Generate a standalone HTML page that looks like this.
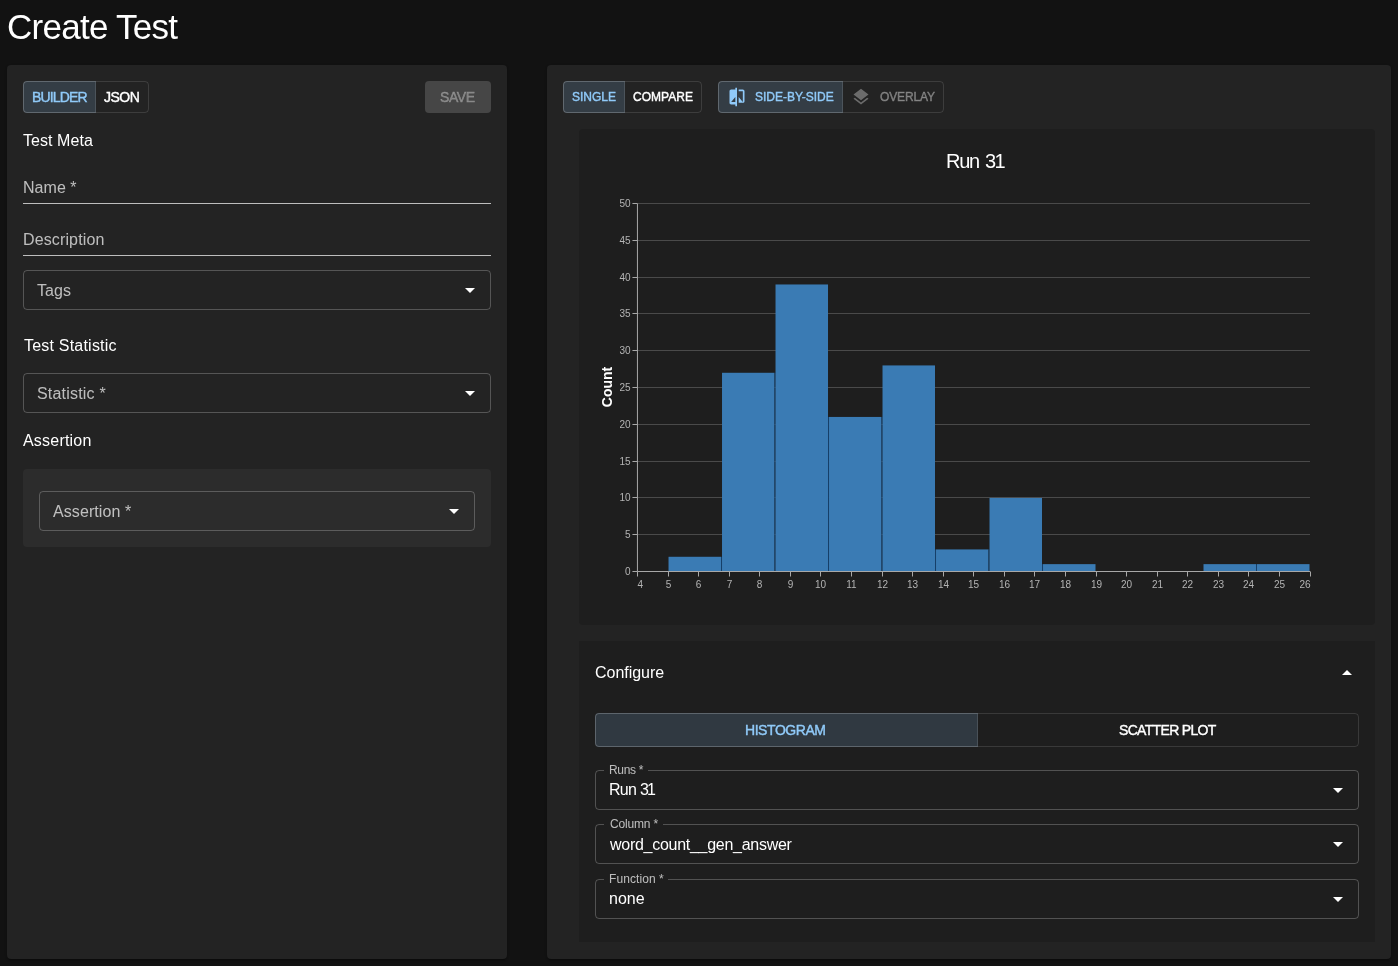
<!DOCTYPE html>
<html><head><meta charset="utf-8"><title>Create Test</title>
<style>
html,body{margin:0;padding:0;}
body{width:1398px;height:966px;background:#121212;position:relative;overflow:hidden;font-family:"Liberation Sans",sans-serif;}
.t{position:absolute;line-height:1;white-space:nowrap;will-change:transform;}
.b{position:absolute;}
</style></head><body>
<div class="t" style="left:6.64px;top:9px;font-size:35px;color:#ffffff;letter-spacing:-0.740px;font-weight:normal;">Create Test</div>
<div class="b" style="left:7px;top:65px;width:500px;height:894px;background:#232323;border-radius:4px;box-shadow:0 2px 1px -1px rgba(0,0,0,.2),0 1px 1px 0 rgba(0,0,0,.14),0 1px 3px 0 rgba(0,0,0,.12);"></div>
<div class="b" style="left:23px;top:81px;width:126px;height:32px;border:1px solid rgba(255,255,255,0.12);border-radius:4px;box-sizing:border-box;"></div>
<div class="b" style="left:23px;top:81px;width:73px;height:32px;background:rgba(144,202,249,0.16);border:1px solid rgba(255,255,255,0.12);border-radius:4px 0 0 4px;box-sizing:border-box;"></div>
<div class="t" style="left:31.50px;top:90px;font-size:14px;color:#90caf9;letter-spacing:-0.827px;font-weight:normal;-webkit-text-stroke:0.4px #90caf9;">BUILDER</div>
<div class="t" style="left:104.40px;top:90px;font-size:14px;color:#ffffff;letter-spacing:-0.533px;font-weight:normal;-webkit-text-stroke:0.4px #ffffff;">JSON</div>
<div class="b" style="left:425px;top:81px;width:66px;height:32px;background:#464646;border-radius:4px;"></div>
<div class="t" style="left:440.48px;top:90px;font-size:14px;color:rgba(255,255,255,0.3);letter-spacing:-0.420px;font-weight:normal;-webkit-text-stroke:0.4px rgba(255,255,255,0.3);">SAVE</div>
<div class="t" style="left:23.26px;top:133px;font-size:16px;color:#ffffff;letter-spacing:0.058px;font-weight:normal;">Test Meta</div>
<div class="t" style="left:22.50px;top:180px;font-size:16px;color:rgba(255,255,255,0.7);letter-spacing:0.048px;font-weight:normal;">Name *</div>
<div class="b" style="left:23px;top:203px;width:468px;height:1px;background:rgba(255,255,255,0.7);"></div>
<div class="t" style="left:22.52px;top:232px;font-size:16px;color:rgba(255,255,255,0.7);letter-spacing:0.128px;font-weight:normal;">Description</div>
<div class="b" style="left:23px;top:255px;width:468px;height:1px;background:rgba(255,255,255,0.7);"></div>
<div class="b" style="left:23px;top:270px;width:468px;height:40px;border:1px solid rgba(255,255,255,0.23);border-radius:4px;box-sizing:border-box;"></div>
<div class="t" style="left:37.36px;top:283px;font-size:16px;color:rgba(255,255,255,0.7);letter-spacing:0.033px;font-weight:normal;">Tags</div>
<svg class="b" style="left:465px;top:287.5px" width="10" height="5" viewBox="0 0 10 5"><path d="M0 0L5 5L10 0z" fill="#fff"/></svg>
<div class="t" style="left:23.98px;top:338px;font-size:16px;color:#ffffff;letter-spacing:0.208px;font-weight:normal;">Test Statistic</div>
<div class="b" style="left:23px;top:373px;width:468px;height:40px;border:1px solid rgba(255,255,255,0.23);border-radius:4px;box-sizing:border-box;"></div>
<div class="t" style="left:36.74px;top:386px;font-size:16px;color:rgba(255,255,255,0.7);letter-spacing:0.196px;font-weight:normal;">Statistic *</div>
<svg class="b" style="left:465px;top:390.5px" width="10" height="5" viewBox="0 0 10 5"><path d="M0 0L5 5L10 0z" fill="#fff"/></svg>
<div class="t" style="left:23.36px;top:433px;font-size:16px;color:#ffffff;letter-spacing:0.203px;font-weight:normal;">Assertion</div>
<div class="b" style="left:23px;top:469px;width:468px;height:78px;background:#2c2c2c;border-radius:4px;"></div>
<div class="b" style="left:39px;top:491px;width:436px;height:40px;border:1px solid rgba(255,255,255,0.23);border-radius:4px;box-sizing:border-box;"></div>
<div class="t" style="left:53.36px;top:504px;font-size:16px;color:rgba(255,255,255,0.7);letter-spacing:0.088px;font-weight:normal;">Assertion *</div>
<svg class="b" style="left:449px;top:508.5px" width="10" height="5" viewBox="0 0 10 5"><path d="M0 0L5 5L10 0z" fill="#fff"/></svg>
<div class="b" style="left:547px;top:65px;width:844px;height:894px;background:#232323;border-radius:4px;box-shadow:0 2px 1px -1px rgba(0,0,0,.2),0 1px 1px 0 rgba(0,0,0,.14),0 1px 3px 0 rgba(0,0,0,.12);"></div>
<div class="b" style="left:563px;top:81px;width:139px;height:32px;border:1px solid rgba(255,255,255,0.12);border-radius:4px;box-sizing:border-box;"></div>
<div class="b" style="left:563px;top:81px;width:62px;height:32px;background:rgba(144,202,249,0.16);border:1px solid rgba(255,255,255,0.12);border-radius:4px 0 0 4px;box-sizing:border-box;"></div>
<div class="t" style="left:572.38px;top:91px;font-size:12px;color:#90caf9;letter-spacing:-0.008px;font-weight:normal;-webkit-text-stroke:0.4px #90caf9;">SINGLE</div>
<div class="t" style="left:633.15px;top:91px;font-size:12px;color:#ffffff;letter-spacing:0.032px;font-weight:normal;-webkit-text-stroke:0.4px #ffffff;">COMPARE</div>
<div class="b" style="left:718px;top:81px;width:226px;height:32px;border:1px solid rgba(255,255,255,0.12);border-radius:4px;box-sizing:border-box;"></div>
<div class="b" style="left:718px;top:81px;width:125px;height:32px;background:rgba(144,202,249,0.16);border:1px solid rgba(255,255,255,0.12);border-radius:4px 0 0 4px;box-sizing:border-box;"></div>
<svg class="b" style="left:726.7px;top:86.6px" width="20" height="20" viewBox="0 0 24 24"><path d="M10 3H5c-1.11 0-2 .9-2 2v14c0 1.1.89 2 2 2h5v2h2V1h-2v2zm0 15H5l5-6v6zm9-15h-5v2h5v13l-5-6v7h5c1.1 0 2-.9 2-2V5c0-1.1-.9-2-2-2z" fill="#90caf9"/></svg>
<div class="t" style="left:755.19px;top:91px;font-size:12px;color:#90caf9;letter-spacing:-0.017px;font-weight:normal;-webkit-text-stroke:0.4px #90caf9;">SIDE-BY-SIDE</div>
<svg class="b" style="left:851.1px;top:87.2px" width="20" height="20" viewBox="0 0 24 24"><path d="M11.99 18.54l-7.37-5.73L3 14.07l9 7 9-7-1.63-1.27-7.38 5.74zM12 16l7.36-5.73L21 9l-9-7-9 7 1.63 1.27L12 16z" fill="rgba(255,255,255,0.33)"/></svg>
<div class="t" style="left:879.66px;top:91px;font-size:12px;color:rgba(255,255,255,0.33);letter-spacing:-0.135px;font-weight:normal;-webkit-text-stroke:0.4px rgba(255,255,255,0.33);">OVERLAY</div>
<div class="b" style="left:579px;top:129px;width:796px;height:496px;background:#1e1e1e;border-radius:4px;"></div>
<div class="t" style="left:946.24px;top:151px;font-size:20px;color:#ffffff;letter-spacing:-1.250px;font-weight:normal;">Run</div>
<div class="t" style="left:985.00px;top:151px;font-size:20px;color:#ffffff;letter-spacing:-1.740px;font-weight:normal;">31</div>
<svg class="b" style="left:0;top:0" width="1398" height="966" viewBox="0 0 1398 966"><line x1="637.45" x2="1310.0" y1="534.5" y2="534.5" stroke="#4a4a4a" stroke-width="1"/><line x1="637.45" x2="1310.0" y1="497.5" y2="497.5" stroke="#4a4a4a" stroke-width="1"/><line x1="637.45" x2="1310.0" y1="461.5" y2="461.5" stroke="#4a4a4a" stroke-width="1"/><line x1="637.45" x2="1310.0" y1="424.5" y2="424.5" stroke="#4a4a4a" stroke-width="1"/><line x1="637.45" x2="1310.0" y1="387.5" y2="387.5" stroke="#4a4a4a" stroke-width="1"/><line x1="637.45" x2="1310.0" y1="350.5" y2="350.5" stroke="#4a4a4a" stroke-width="1"/><line x1="637.45" x2="1310.0" y1="313.5" y2="313.5" stroke="#4a4a4a" stroke-width="1"/><line x1="637.45" x2="1310.0" y1="277.5" y2="277.5" stroke="#4a4a4a" stroke-width="1"/><line x1="637.45" x2="1310.0" y1="240.5" y2="240.5" stroke="#4a4a4a" stroke-width="1"/><line x1="637.45" x2="1310.0" y1="203.5" y2="203.5" stroke="#4a4a4a" stroke-width="1"/><rect x="668.52" y="556.78" width="52.50" height="14.72" fill="#3a7bb4"/><rect x="721.02" y="556.78" width="1" height="14.72" fill="#17406a"/><rect x="722.02" y="372.78" width="52.50" height="198.72" fill="#3a7bb4"/><rect x="774.52" y="372.78" width="1" height="198.72" fill="#17406a"/><rect x="775.52" y="284.46" width="52.50" height="287.04" fill="#3a7bb4"/><rect x="828.02" y="416.94" width="1" height="154.56" fill="#17406a"/><rect x="829.02" y="416.94" width="52.50" height="154.56" fill="#3a7bb4"/><rect x="881.51" y="416.94" width="1" height="154.56" fill="#17406a"/><rect x="882.51" y="365.42" width="52.50" height="206.08" fill="#3a7bb4"/><rect x="935.01" y="549.42" width="1" height="22.08" fill="#17406a"/><rect x="936.01" y="549.42" width="52.50" height="22.08" fill="#3a7bb4"/><rect x="988.51" y="549.42" width="1" height="22.08" fill="#17406a"/><rect x="989.51" y="497.90" width="52.50" height="73.60" fill="#3a7bb4"/><rect x="1042.01" y="564.14" width="1" height="7.36" fill="#17406a"/><rect x="1043.01" y="564.14" width="52.50" height="7.36" fill="#3a7bb4"/><rect x="1203.50" y="564.14" width="52.50" height="7.36" fill="#3a7bb4"/><rect x="1256.00" y="564.14" width="1" height="7.36" fill="#17406a"/><rect x="1257.00" y="564.14" width="52.50" height="7.36" fill="#3a7bb4"/><line x1="637.45" x2="637.45" y1="203.5" y2="571.5" stroke="#a8a8a8" stroke-width="1"/><line x1="637.45" x2="1310.0" y1="571.5" y2="571.5" stroke="#a8a8a8" stroke-width="1"/><line x1="632.45" x2="637.45" y1="571.5" y2="571.5" stroke="#a8a8a8" stroke-width="1"/><text x="630.5" y="575.0" text-anchor="end" font-size="10" fill="#b4b4b4" font-family="Liberation Sans">0</text><line x1="632.45" x2="637.45" y1="534.5" y2="534.5" stroke="#a8a8a8" stroke-width="1"/><text x="630.5" y="538.0" text-anchor="end" font-size="10" fill="#b4b4b4" font-family="Liberation Sans">5</text><line x1="632.45" x2="637.45" y1="497.5" y2="497.5" stroke="#a8a8a8" stroke-width="1"/><text x="630.5" y="501.0" text-anchor="end" font-size="10" fill="#b4b4b4" font-family="Liberation Sans">10</text><line x1="632.45" x2="637.45" y1="461.5" y2="461.5" stroke="#a8a8a8" stroke-width="1"/><text x="630.5" y="465.0" text-anchor="end" font-size="10" fill="#b4b4b4" font-family="Liberation Sans">15</text><line x1="632.45" x2="637.45" y1="424.5" y2="424.5" stroke="#a8a8a8" stroke-width="1"/><text x="630.5" y="428.0" text-anchor="end" font-size="10" fill="#b4b4b4" font-family="Liberation Sans">20</text><line x1="632.45" x2="637.45" y1="387.5" y2="387.5" stroke="#a8a8a8" stroke-width="1"/><text x="630.5" y="391.0" text-anchor="end" font-size="10" fill="#b4b4b4" font-family="Liberation Sans">25</text><line x1="632.45" x2="637.45" y1="350.5" y2="350.5" stroke="#a8a8a8" stroke-width="1"/><text x="630.5" y="354.0" text-anchor="end" font-size="10" fill="#b4b4b4" font-family="Liberation Sans">30</text><line x1="632.45" x2="637.45" y1="313.5" y2="313.5" stroke="#a8a8a8" stroke-width="1"/><text x="630.5" y="317.0" text-anchor="end" font-size="10" fill="#b4b4b4" font-family="Liberation Sans">35</text><line x1="632.45" x2="637.45" y1="277.5" y2="277.5" stroke="#a8a8a8" stroke-width="1"/><text x="630.5" y="281.0" text-anchor="end" font-size="10" fill="#b4b4b4" font-family="Liberation Sans">40</text><line x1="632.45" x2="637.45" y1="240.5" y2="240.5" stroke="#a8a8a8" stroke-width="1"/><text x="630.5" y="244.0" text-anchor="end" font-size="10" fill="#b4b4b4" font-family="Liberation Sans">45</text><line x1="632.45" x2="637.45" y1="203.5" y2="203.5" stroke="#a8a8a8" stroke-width="1"/><text x="630.5" y="207.0" text-anchor="end" font-size="10" fill="#b4b4b4" font-family="Liberation Sans">50</text><line x1="637.50" x2="637.50" y1="571.5" y2="576.5" stroke="#a8a8a8" stroke-width="1"/><text x="637.50" y="587.5" text-anchor="start" font-size="10" fill="#b4b4b4" font-family="Liberation Sans">4</text><line x1="668.50" x2="668.50" y1="571.5" y2="576.5" stroke="#a8a8a8" stroke-width="1"/><text x="668.50" y="587.5" text-anchor="middle" font-size="10" fill="#b4b4b4" font-family="Liberation Sans">5</text><line x1="698.50" x2="698.50" y1="571.5" y2="576.5" stroke="#a8a8a8" stroke-width="1"/><text x="698.50" y="587.5" text-anchor="middle" font-size="10" fill="#b4b4b4" font-family="Liberation Sans">6</text><line x1="729.50" x2="729.50" y1="571.5" y2="576.5" stroke="#a8a8a8" stroke-width="1"/><text x="729.50" y="587.5" text-anchor="middle" font-size="10" fill="#b4b4b4" font-family="Liberation Sans">7</text><line x1="759.50" x2="759.50" y1="571.5" y2="576.5" stroke="#a8a8a8" stroke-width="1"/><text x="759.50" y="587.5" text-anchor="middle" font-size="10" fill="#b4b4b4" font-family="Liberation Sans">8</text><line x1="790.50" x2="790.50" y1="571.5" y2="576.5" stroke="#a8a8a8" stroke-width="1"/><text x="790.50" y="587.5" text-anchor="middle" font-size="10" fill="#b4b4b4" font-family="Liberation Sans">9</text><line x1="820.50" x2="820.50" y1="571.5" y2="576.5" stroke="#a8a8a8" stroke-width="1"/><text x="820.50" y="587.5" text-anchor="middle" font-size="10" fill="#b4b4b4" font-family="Liberation Sans">10</text><line x1="851.50" x2="851.50" y1="571.5" y2="576.5" stroke="#a8a8a8" stroke-width="1"/><text x="851.50" y="587.5" text-anchor="middle" font-size="10" fill="#b4b4b4" font-family="Liberation Sans">11</text><line x1="882.50" x2="882.50" y1="571.5" y2="576.5" stroke="#a8a8a8" stroke-width="1"/><text x="882.50" y="587.5" text-anchor="middle" font-size="10" fill="#b4b4b4" font-family="Liberation Sans">12</text><line x1="912.50" x2="912.50" y1="571.5" y2="576.5" stroke="#a8a8a8" stroke-width="1"/><text x="912.50" y="587.5" text-anchor="middle" font-size="10" fill="#b4b4b4" font-family="Liberation Sans">13</text><line x1="943.50" x2="943.50" y1="571.5" y2="576.5" stroke="#a8a8a8" stroke-width="1"/><text x="943.50" y="587.5" text-anchor="middle" font-size="10" fill="#b4b4b4" font-family="Liberation Sans">14</text><line x1="973.50" x2="973.50" y1="571.5" y2="576.5" stroke="#a8a8a8" stroke-width="1"/><text x="973.50" y="587.5" text-anchor="middle" font-size="10" fill="#b4b4b4" font-family="Liberation Sans">15</text><line x1="1004.50" x2="1004.50" y1="571.5" y2="576.5" stroke="#a8a8a8" stroke-width="1"/><text x="1004.50" y="587.5" text-anchor="middle" font-size="10" fill="#b4b4b4" font-family="Liberation Sans">16</text><line x1="1034.50" x2="1034.50" y1="571.5" y2="576.5" stroke="#a8a8a8" stroke-width="1"/><text x="1034.50" y="587.5" text-anchor="middle" font-size="10" fill="#b4b4b4" font-family="Liberation Sans">17</text><line x1="1065.50" x2="1065.50" y1="571.5" y2="576.5" stroke="#a8a8a8" stroke-width="1"/><text x="1065.50" y="587.5" text-anchor="middle" font-size="10" fill="#b4b4b4" font-family="Liberation Sans">18</text><line x1="1096.50" x2="1096.50" y1="571.5" y2="576.5" stroke="#a8a8a8" stroke-width="1"/><text x="1096.50" y="587.5" text-anchor="middle" font-size="10" fill="#b4b4b4" font-family="Liberation Sans">19</text><line x1="1126.50" x2="1126.50" y1="571.5" y2="576.5" stroke="#a8a8a8" stroke-width="1"/><text x="1126.50" y="587.5" text-anchor="middle" font-size="10" fill="#b4b4b4" font-family="Liberation Sans">20</text><line x1="1157.50" x2="1157.50" y1="571.5" y2="576.5" stroke="#a8a8a8" stroke-width="1"/><text x="1157.50" y="587.5" text-anchor="middle" font-size="10" fill="#b4b4b4" font-family="Liberation Sans">21</text><line x1="1187.50" x2="1187.50" y1="571.5" y2="576.5" stroke="#a8a8a8" stroke-width="1"/><text x="1187.50" y="587.5" text-anchor="middle" font-size="10" fill="#b4b4b4" font-family="Liberation Sans">22</text><line x1="1218.50" x2="1218.50" y1="571.5" y2="576.5" stroke="#a8a8a8" stroke-width="1"/><text x="1218.50" y="587.5" text-anchor="middle" font-size="10" fill="#b4b4b4" font-family="Liberation Sans">23</text><line x1="1248.50" x2="1248.50" y1="571.5" y2="576.5" stroke="#a8a8a8" stroke-width="1"/><text x="1248.50" y="587.5" text-anchor="middle" font-size="10" fill="#b4b4b4" font-family="Liberation Sans">24</text><line x1="1279.50" x2="1279.50" y1="571.5" y2="576.5" stroke="#a8a8a8" stroke-width="1"/><text x="1279.50" y="587.5" text-anchor="middle" font-size="10" fill="#b4b4b4" font-family="Liberation Sans">25</text><line x1="1310.50" x2="1310.50" y1="571.5" y2="576.5" stroke="#a8a8a8" stroke-width="1"/><text x="1310.50" y="587.5" text-anchor="end" font-size="10" fill="#b4b4b4" font-family="Liberation Sans">26</text><text transform="translate(612,387) rotate(-90)" text-anchor="middle" font-size="14" font-weight="bold" fill="#fff" font-family="Liberation Sans">Count</text></svg>
<div class="b" style="left:579px;top:641px;width:796px;height:301px;background:#1e1e1e;"></div>
<div class="t" style="left:594.98px;top:665px;font-size:16px;color:#ffffff;letter-spacing:-0.033px;font-weight:normal;">Configure</div>
<svg class="b" style="left:1342px;top:670px" width="10" height="5" viewBox="0 0 10 5"><path d="M0 5L5 0L10 5z" fill="#fff"/></svg>
<div class="b" style="left:595px;top:713px;width:764px;height:34px;border:1px solid rgba(255,255,255,0.12);border-radius:4px;box-sizing:border-box;"></div>
<div class="b" style="left:595px;top:713px;width:383px;height:34px;background:rgba(144,202,249,0.16);border:1px solid rgba(255,255,255,0.12);border-radius:4px 0 0 4px;box-sizing:border-box;"></div>
<div class="t" style="left:745.26px;top:723px;font-size:14px;color:#90caf9;letter-spacing:-0.440px;font-weight:normal;-webkit-text-stroke:0.4px #90caf9;">HISTOGRAM</div>
<div class="t" style="left:1118.70px;top:723px;font-size:14px;color:#ffffff;letter-spacing:-0.673px;font-weight:normal;-webkit-text-stroke:0.4px #ffffff;">SCATTER PLOT</div>
<div class="b" style="left:595px;top:770px;width:764px;height:40px;border:1px solid rgba(255,255,255,0.23);border-radius:4px;box-sizing:border-box;"></div><div class="b" style="left:604px;top:769px;width:44px;height:3px;background:#1e1e1e;"></div><div class="t" style="left:608.98px;top:764px;font-size:12px;color:rgba(255,255,255,0.7);letter-spacing:-0.304px;font-weight:normal;">Runs *</div><svg class="b" style="left:1333px;top:787.5px" width="10" height="5" viewBox="0 0 10 5"><path d="M0 0L5 5L10 0z" fill="#fff"/></svg>
<div class="t" style="left:608.52px;top:782px;font-size:16px;color:#ffffff;letter-spacing:-0.680px;font-weight:normal;">Run</div>
<div class="t" style="left:639.82px;top:782px;font-size:16px;color:#ffffff;letter-spacing:-1.780px;font-weight:normal;">31</div>
<div class="b" style="left:595px;top:824px;width:764px;height:40px;border:1px solid rgba(255,255,255,0.23);border-radius:4px;box-sizing:border-box;"></div><div class="b" style="left:604px;top:823px;width:59px;height:3px;background:#1e1e1e;"></div><div class="t" style="left:609.98px;top:818px;font-size:12px;color:rgba(255,255,255,0.7);letter-spacing:-0.186px;font-weight:normal;">Column *</div><div class="t" style="left:609.98px;top:837px;font-size:16px;color:#ffffff;letter-spacing:-0.275px;font-weight:normal;">word_count__gen_answer</div><svg class="b" style="left:1333px;top:841.5px" width="10" height="5" viewBox="0 0 10 5"><path d="M0 0L5 5L10 0z" fill="#fff"/></svg>
<div class="b" style="left:595px;top:879px;width:764px;height:40px;border:1px solid rgba(255,255,255,0.23);border-radius:4px;box-sizing:border-box;"></div><div class="b" style="left:604px;top:878px;width:64px;height:3px;background:#1e1e1e;"></div><div class="t" style="left:608.98px;top:873px;font-size:12px;color:rgba(255,255,255,0.7);letter-spacing:0.082px;font-weight:normal;">Function *</div><div class="t" style="left:608.98px;top:891px;font-size:16px;color:#ffffff;letter-spacing:0.007px;font-weight:normal;">none</div><svg class="b" style="left:1333px;top:896.5px" width="10" height="5" viewBox="0 0 10 5"><path d="M0 0L5 5L10 0z" fill="#fff"/></svg>
</body></html>
